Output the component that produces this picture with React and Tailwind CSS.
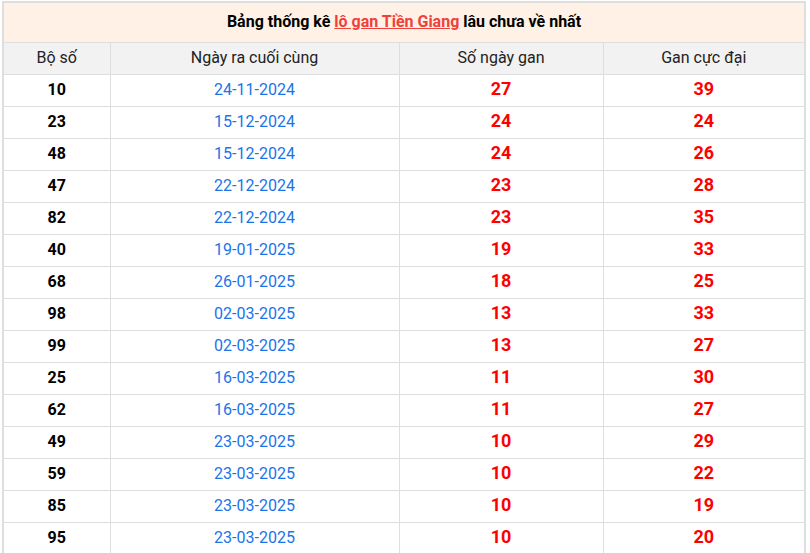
import React from 'react';

const rows = [
  ['10', '24-11-2024', '27', '39'],
  ['23', '15-12-2024', '24', '24'],
  ['48', '15-12-2024', '24', '26'],
  ['47', '22-12-2024', '23', '28'],
  ['82', '22-12-2024', '23', '35'],
  ['40', '19-01-2025', '19', '33'],
  ['68', '26-01-2025', '18', '25'],
  ['98', '02-03-2025', '13', '33'],
  ['99', '02-03-2025', '13', '27'],
  ['25', '16-03-2025', '11', '30'],
  ['62', '16-03-2025', '11', '27'],
  ['49', '23-03-2025', '10', '29'],
  ['59', '23-03-2025', '10', '22'],
  ['85', '23-03-2025', '10', '19'],
  ['95', '23-03-2025', '10', '20'],
];

function App() {
  return (
    <div className="bg-white pl-[2px] pt-[1px] text-[16px]" style={{ fontFamily: 'Roboto, "Liberation Sans", sans-serif' }}>
      <table className="w-[804px] border-collapse border-2 border-[#dedede] text-center">
        <thead>
          <tr>
            <th colSpan={4} className="h-[40px] border border-[#dedede] bg-[#fff1e5] font-bold text-black">
              Bảng thống kê{' '}
              <a href="#" className="text-[#f0403c] underline">
                lô gan Tiền Giang
              </a>{' '}
              lâu chưa về nhất
            </th>
          </tr>
          <tr className="bg-[#f2f2f2] font-normal text-[#222]">
            <th className="h-[32px] w-[107px] border border-[#dedede] font-normal">Bộ số</th>
            <th className="w-[289px] border border-[#dedede] font-normal">Ngày ra cuối cùng</th>
            <th className="w-[204px] border border-[#dedede] font-normal">Số ngày gan</th>
            <th className="border border-[#dedede] font-normal">Gan cực đại</th>
          </tr>
        </thead>
        <tbody>
          {rows.map((r) => (
            <tr key={r[0]}>
              <td className="h-[32px] border border-[#dedede] font-bold text-black">{r[0]}</td>
              <td className="border border-[#dedede] text-[#1a73e8]">{r[1]}</td>
              <td className="border border-[#dedede] pb-[2px] text-[18px] leading-none font-bold text-[#ff0000]">{r[2]}</td>
              <td className="border border-[#dedede] pb-[2px] text-[18px] leading-none font-bold text-[#ff0000]">{r[3]}</td>
            </tr>
          ))}
        </tbody>
      </table>
    </div>
  );
}

export default App;
